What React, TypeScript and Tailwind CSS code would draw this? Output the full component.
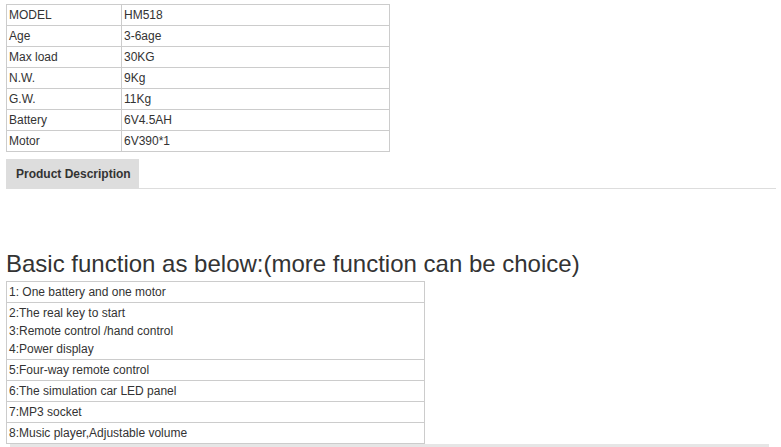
const specs: [string, string][] = [
  ["MODEL", "HM518"],
  ["Age", "3-6age"],
  ["Max load", "30KG"],
  ["N.W.", "9Kg"],
  ["G.W.", "11Kg"],
  ["Battery", "6V4.5AH"],
  ["Motor", "6V390*1"],
];

const functions: string[][] = [
  ["1: One battery and one motor"],
  ["2:The real key to start", "3:Remote control /hand control", "4:Power display"],
  ["5:Four-way remote control"],
  ["6:The simulation car LED panel"],
  ["7:MP3 socket"],
  ["8:Music player,Adjustable volume"],
];

export default function App() {
  return (
    <div className="h-[447px] w-[781px] overflow-hidden bg-white pt-[4px] font-['Liberation_Sans',Arial,sans-serif] text-[12px] text-[#333]">
      {/* Spec table */}
      <table className="ml-[6px] w-[384px] border-collapse">
        <tbody>
          {specs.map(([k, v]) => (
            <tr key={k}>
              <td className="w-[115px] border border-[#ccc] px-[2px] py-[1px] leading-[18px]">{k}</td>
              <td className="border border-[#ccc] px-[2px] py-[1px] leading-[18px]">{v}</td>
            </tr>
          ))}
        </tbody>
      </table>

      {/* Tab bar */}
      <div className="mt-[7px] ml-[6px] mr-[5px] flex border-b border-[#ddd]">
        <div className="flex h-[29px] w-[133px] items-center bg-[#ddd] pl-[10px] text-[12px] font-bold text-[#333]">
          Product Description
        </div>
      </div>

      {/* Heading */}
      <h2 className="mt-[60px] mb-[2px] ml-[6px] text-[24px] leading-[30px] text-[#333]">
        Basic function as below:(more function can be choice)
      </h2>

      <table className="ml-[6px] w-[419px] border-collapse">
        <tbody>
          {functions.map((lines) => (
            <tr key={lines[0]}>
              <td className="border border-[#ccc] px-[2px] py-[1px] leading-[18px]">
                {lines.map((l) => (
                  <div key={l}>{l}</div>
                ))}
              </td>
            </tr>
          ))}
        </tbody>
      </table>
      <div className="ml-[10px] mr-[12px] h-[3px] bg-[#e6e6e6]" />
    </div>
  );
}
